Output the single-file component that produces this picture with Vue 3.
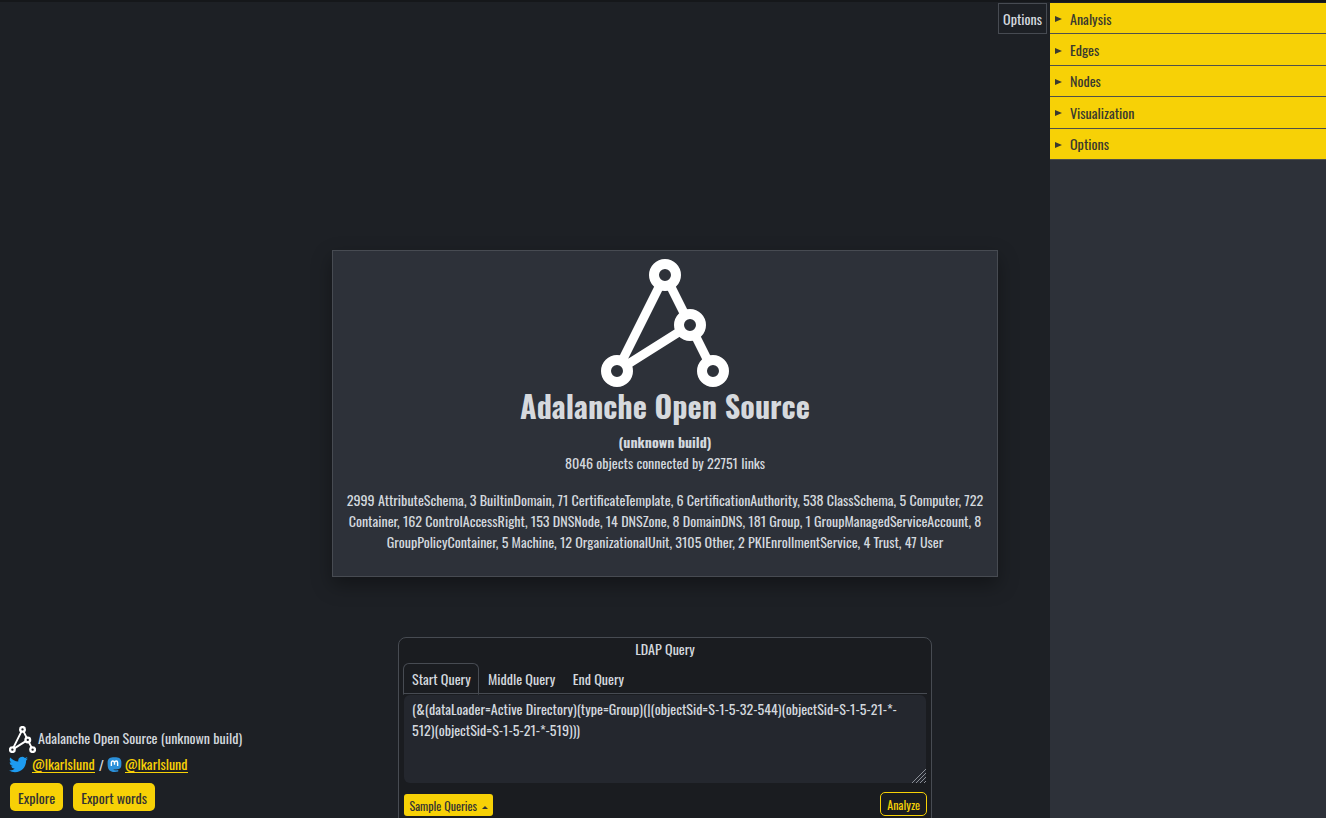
<script setup>
const sections = ['Analysis', 'Edges', 'Nodes', 'Visualization', 'Options']
const tabs = ['Start Query', 'Middle Query', 'End Query']
</script>

<template>
  <div class="page">
    <main class="center">
      <section class="card">
        <svg class="logo" viewBox="0 0 128 128" width="128" height="128" aria-hidden="true">
          <g fill="none" stroke="#fff" stroke-width="10">
            <path d="M64 16 16 112M64 16l48 96M16 112 89 66" stroke-width="9" />
            <circle cx="64" cy="16" r="11" fill="#2d3139" />
            <circle cx="89" cy="66" r="11" fill="#2d3139" />
            <circle cx="16" cy="112" r="11" fill="#2d3139" />
            <circle cx="112" cy="112" r="11" fill="#2d3139" />
          </g>
        </svg>
        <h1>Adalanche Open Source</h1>
        <p class="build">(unknown build)</p>
        <p class="stats">8046 objects connected by 22751 links</p>
        <p class="types">2999 AttributeSchema, 3 BuiltinDomain, 71 CertificateTemplate, 6 CertificationAuthority, 538 ClassSchema, 5 Computer, 722 Container, 162 ControlAccessRight, 153 DNSNode, 14 DNSZone, 8 DomainDNS, 181 Group, 1 GroupManagedServiceAccount, 8 GroupPolicyContainer, 5 Machine, 12 OrganizationalUnit, 3105 Other, 2 PKIEnrollmentService, 4 Trust, 47 User</p>
      </section>

      <section class="query">
        <div class="query-title">LDAP Query</div>
        <div class="tabs">
          <span v-for="(t, i) in tabs" :key="t" class="tab" :class="{ active: i === 0 }">{{ t }}</span>
        </div>
        <div class="editor-wrap">
          <textarea class="editor" spellcheck="false">(&amp;(dataLoader=Active Directory)(type=Group)(|(objectSid=S-1-5-32-544)(objectSid=S-1-5-21-*-512)(objectSid=S-1-5-21-*-519)))</textarea>
          <svg class="grip" width="14" height="14" viewBox="0 0 14 14" aria-hidden="true"><path d="M14 0 0 14M14 4 4 14M14 8 8 14M14 12 12 14" stroke="#8b8f96" fill="none" /></svg>
        </div>
        <div class="query-actions">
          <button class="btn-small">Sample Queries <i class="caret"></i></button>
          <button class="btn-outline">Analyze</button>
        </div>
      </section>
    </main>

    <aside class="panel">
      <button class="options-toggle">Options</button>
      <div v-for="s in sections" :key="s" class="acc"><i class="tri"></i>{{ s }}</div>
    </aside>

    <footer class="foot">
      <div class="foot-row brand">
        <svg viewBox="0 0 128 128" width="27" height="27" aria-hidden="true">
          <g fill="none" stroke="#fff" stroke-width="11">
            <path d="M64 16 16 112M64 16l48 96M16 112 89 66" stroke-width="9" />
            <circle cx="64" cy="16" r="11" fill="#1d2025" />
            <circle cx="89" cy="66" r="11" fill="#1d2025" />
            <circle cx="16" cy="112" r="11" fill="#1d2025" />
            <circle cx="112" cy="112" r="11" fill="#1d2025" />
          </g>
        </svg>
        <span class="brand-name">Adalanche Open Source (unknown build)</span>
      </div>
      <div class="foot-row links">
        <svg viewBox="0 0 24 24" width="19" height="19" aria-hidden="true"><path fill="#1d9bf0" d="M23.95 4.57a10 10 0 0 1-2.82.77 4.96 4.96 0 0 0 2.16-2.72c-.95.55-2 .96-3.13 1.19a4.92 4.92 0 0 0-8.38 4.48C7.69 8.1 4.07 6.13 1.64 3.16a4.82 4.82 0 0 0-.67 2.48c0 1.71.87 3.21 2.19 4.1a4.9 4.9 0 0 1-2.23-.62v.06a4.92 4.92 0 0 0 3.95 4.83 5 5 0 0 1-2.21.08 4.94 4.94 0 0 0 4.6 3.42A9.87 9.87 0 0 1 0 19.54a14 14 0 0 0 7.56 2.21c9.05 0 14-7.5 14-13.98 0-.21 0-.42-.02-.63a9.94 9.94 0 0 0 2.41-2.57z" /></svg>
        <a>@lkarlslund</a>
        <span class="slash">/</span>
        <svg class="masto" viewBox="0 0 24 24" width="15" height="16" aria-hidden="true"><path fill="#2b90d9" d="M12 1c7 0 11 2 11 8 0 8 0 10-6 11.500-2 .5-5 .5-7 .3 1 1.500 5 1.500 8 .7v2.500c-5 1.500-14 1-16-5C1 16 1 12 1 9c0-6 4-8 11-8z" /><path d="M7 15V9.500C7 6.500 11 6.500 12 9.500 13 6.500 17 6.500 17 9.500V15M12 9.500V13" fill="none" stroke="#fff" stroke-width="2.200" /></svg>
        <a>@lkarlslund</a>
      </div>
      <div class="foot-row buttons">
        <button class="btn">Explore</button>
        <button class="btn">Export words</button>
      </div>
    </footer>
  </div>
</template>

<style>
body { background: #1d2025; overflow: hidden; }
</style>

<style scoped>
.page {
  position: relative;
  width: 1326px;
  height: 818px;
  overflow: hidden;
  box-sizing: border-box;
  border-top: 2px solid #15171a;
  background: #1d2025;
  color: #d3d8de;
  font-family: "Oswald", "Open Sans", sans-serif;
  font-size: 14.1px;
  font-weight: 400;
}
button { font-family: inherit; font-weight: 400; cursor: pointer; }
p, h1 { margin: 0; }

.center { display: flex; flex-direction: column; align-items: center; padding: 248px 0 0 4px; }

.card {
  box-sizing: border-box;
  width: 666px;
  height: 327px;
  padding: 8px 12px 0;
  background: #2d3139;
  border: 1px solid #474b52;
  box-shadow: 0 8px 18px rgba(0, 0, 0, .35);
  text-align: center;
}
.logo { display: block; margin: 0 auto; }
h1 { font-size: 30.2px; line-height: 40px; margin-top: -1px; font-weight: 700; color: #d6d9dd; }
.build { margin-top: 6px; font-weight: 700; line-height: 20px; }
.stats { line-height: 21px; }
.types { margin-top: 16px; line-height: 21px; }

.query {
  box-sizing: border-box;
  width: 534px;
  height: 200px;
  margin-top: 60px;
  padding: 0 4px;
  background: #1a1c20;
  border: 1px solid #474b52;
  border-radius: 8px;
}
.query-title { text-align: center; line-height: 22px; }
.tabs { display: flex; margin-top: 3px; border-bottom: 1px solid #474b52; height: 30px; }
.tab { padding: 0 8.8px; line-height: 32px; }
.tab.active { border: 1px solid #474b52; border-bottom: 1px solid #1a1c20; border-radius: 6px 6px 0 0; padding: 0 7.5px 0 8px; height: 30px; line-height: 30px; box-sizing: content-box; }
.editor-wrap { position: relative; width: 522px; height: 88px; margin: 1px 1px 0; }
.editor {
  display: block;
  box-sizing: border-box;
  width: 100%;
  height: 100%;
  padding: 3px 26px 3px 8px;
  background: #24272e;
  border: 0;
  border-radius: 6px;
  outline: none;
  color: inherit;
  font: inherit;
  line-height: 21px;
  word-break: break-all;
  resize: none;
}
.grip { position: absolute; right: 0; bottom: 0; }
.query-actions { display: flex; justify-content: space-between; align-items: flex-end; margin-top: 9px; padding: 0 0 0 1px; }
.btn-small {
  height: 22px; padding: 0 5.5px; border: 0; border-radius: 3px;
  background: #f7d106; color: #333; font-size: 12px;
}
.caret { display: inline-block; margin-left: 2px; vertical-align: 2px; border: 3px solid transparent; border-top: 0; border-bottom: 3px solid #333; }
.btn-outline {
  height: 24px; padding: 0 6px; border: 1px solid #f7d106; border-radius: 5px;
  background: transparent; color: #f7d106; font-size: 12px;
}

.panel { position: absolute; top: 1px; right: 0; bottom: 0; width: 276px; background: #2d3139; }
.options-toggle {
  position: absolute; top: 0; left: -52px; width: 49px; height: 31px; padding: 0;
  background: #1d2025; border: 1px solid #474b52; color: #d3d8de; font-size: 14.1px;
}
.acc {
  display: flex; align-items: center;
  height: 31.4px; box-sizing: border-box;
  background: #f7d106; color: #3a3a2e;
  border-bottom: 1px solid #50504a;
  padding-left: 5px;
}
.tri { width: 0; height: 0; margin: 2px 8px 0 0; border-left: 7px solid #3a3a2e; border-top: 3px solid transparent; border-bottom: 3px solid transparent; }

.foot { position: absolute; left: 9px; bottom: 7px; display: flex; flex-direction: column; }
.foot-row { display: flex; align-items: center; }
.brand { gap: 2px; }
.brand-name { margin-bottom: 4px; }
.links { gap: 4px; height: 22px; }
.links a { color: #f7d106; border-bottom: 1px solid #f7d106; line-height: 17px; }
.masto { margin: 0 -1px; }
.buttons { gap: 10px; margin-top: 8px; padding-left: 1px; }
.btn { height: 28px; padding: 0 8px; border: 0; border-radius: 5px; background: #f7d106; color: #333; font-size: 14.1px; }
</style>
